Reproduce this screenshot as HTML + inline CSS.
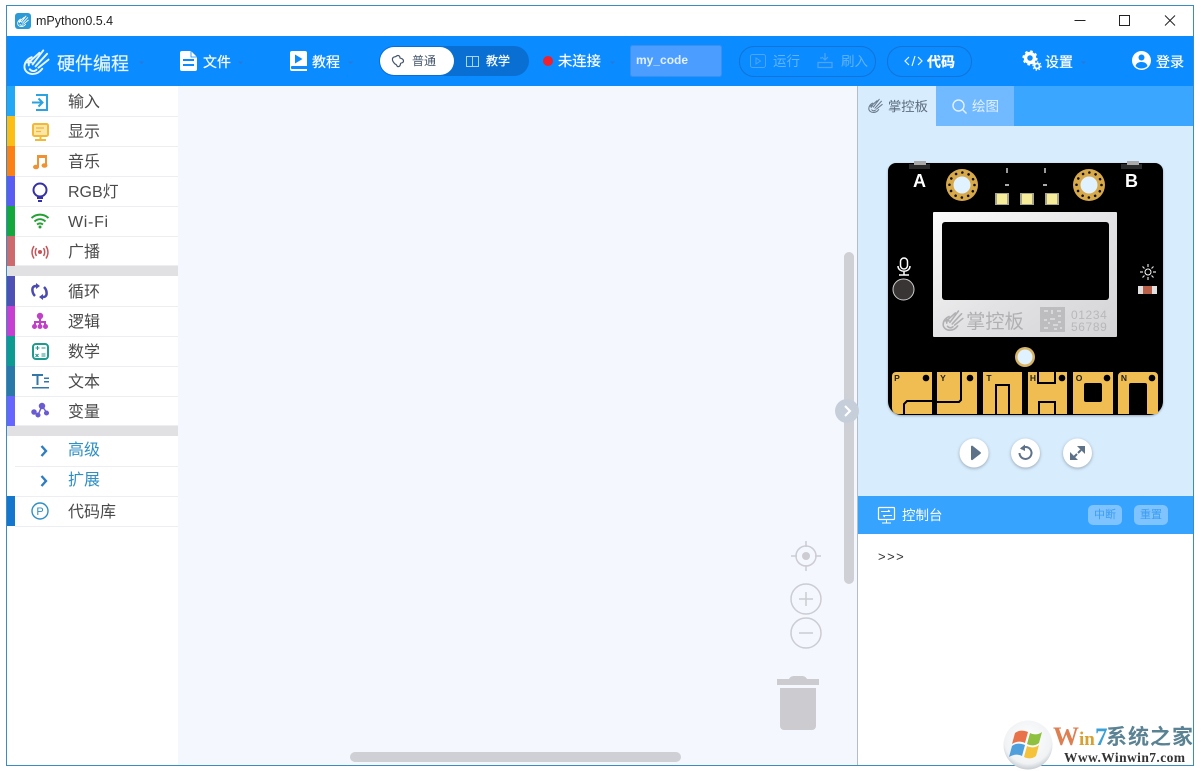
<!DOCTYPE html>
<html><head><meta charset="utf-8"><style>
html,body{margin:0;padding:0;background:#fff;width:1201px;height:771px;overflow:hidden}
body{position:relative;font-family:"Liberation Sans","Noto Sans CJK SC",sans-serif;color:#333}
.a{position:absolute}
.t{position:absolute;white-space:nowrap;line-height:20px;height:20px}
.s{font-size:16px;color:#4a4a4a;left:68px;line-height:30px;height:30px}
.w{color:#fff;font-size:14px;-webkit-text-stroke:.2px #fff}
.bar{position:absolute;left:7px;width:8px;height:30px}
.row{position:absolute;left:15px;width:163px;height:29px;border-bottom:1px solid #eceef2;background:#fff}
svg{position:absolute;left:0;top:0}
</style></head><body>
<!-- window -->
<div class="a" style="left:6px;top:5px;width:1186px;height:759px;border:1px solid #3b8cc0;background:#fff"></div>
<div class="a" style="left:7px;top:36px;width:1186px;height:50px;background:#0a8bff"></div>
<!-- sidebar -->
<div class="a" style="left:7px;top:86px;width:171px;height:679px;background:#fff"></div>
<div class="a" style="left:178px;top:86px;width:679px;height:679px;background:#f5f7ff"></div>
<div class="a" style="left:857px;top:86px;width:1px;height:679px;background:#b4bcc8"></div>
<div class="row" style="top:87px"></div><div class="row" style="top:117px"></div><div class="row" style="top:147px"></div><div class="row" style="top:177px"></div><div class="row" style="top:207px"></div><div class="row" style="top:237px;height:28px"></div>
<div class="row" style="top:277px"></div><div class="row" style="top:307px"></div><div class="row" style="top:337px"></div><div class="row" style="top:367px"></div><div class="row" style="top:397px;height:28px"></div>
<div class="row" style="top:437px"></div><div class="row" style="top:467px"></div><div class="row" style="top:497px"></div>
<div class="bar" style="top:86px;background:#22a8f4"></div>
<div class="bar" style="top:116px;background:#fcbd14"></div>
<div class="bar" style="top:146px;background:#fb8114"></div>
<div class="bar" style="top:176px;background:#5a5cf2"></div>
<div class="bar" style="top:206px;background:#14a83c"></div>
<div class="bar" style="top:236px;background:#cc6a6e"></div>
<div class="a" style="left:7px;top:266px;width:171px;height:10px;background:#e1e1e3"></div>
<div class="bar" style="top:276px;background:#4f50b4"></div>
<div class="bar" style="top:306px;background:#c63fd0"></div>
<div class="bar" style="top:336px;background:#0d9a90"></div>
<div class="bar" style="top:366px;background:#2a78a8"></div>
<div class="bar" style="top:396px;background:#6666ff"></div>
<div class="a" style="left:7px;top:426px;width:171px;height:10px;background:#e1e1e3"></div>
<div class="bar" style="top:496px;background:#1476cc"></div>
<div class="t s" style="top:88px">输入</div>
<div class="t s" style="top:118px">显示</div>
<div class="t s" style="top:148px">音乐</div>
<div class="t s" style="top:178px">RGB灯</div>
<div class="t s" style="top:208px;letter-spacing:.7px">Wi-Fi</div>
<div class="t s" style="top:238px">广播</div>
<div class="t s" style="top:278px">循环</div>
<div class="t s" style="top:308px">逻辑</div>
<div class="t s" style="top:338px">数学</div>
<div class="t s" style="top:368px">文本</div>
<div class="t s" style="top:398px">变量</div>
<div class="t s" style="top:436px;color:#2f8fc4">高级</div>
<div class="t s" style="top:466px;color:#2f8fc4">扩展</div>
<div class="t s" style="top:498px">代码库</div>
<!-- title -->
<div class="t" style="left:36px;top:11px;font-size:12.5px;color:#222">mPython0.5.4</div>
<!-- header pills -->
<div class="a" style="left:379px;top:46px;width:150px;height:30px;border-radius:15px;background:#0a6fd2"></div>
<div class="a" style="left:380px;top:47px;width:74px;height:28px;border-radius:14px;background:#fff"></div>
<div class="a" style="left:630px;top:45px;width:92px;height:32px;border-radius:3px;background:#4b9eff;box-shadow:inset 0 0 0 1px #3a90f0"></div>
<div class="a" style="left:739px;top:46px;width:135px;height:29px;border-radius:15px;border:1px solid #1274d8"></div>
<div class="a" style="left:887px;top:46px;width:83px;height:29px;border-radius:15px;border:1px solid #1274d8"></div>
<div class="t" style="left:57px;top:53px;font-size:18px;color:#e8f4ff;line-height:22px;height:22px;-webkit-text-stroke:.2px #e8f4ff">硬件编程</div>
<div class="t w" style="left:203px;top:52px">文件</div>
<div class="t w" style="left:312px;top:52px">教程</div>
<div class="t" style="left:412px;top:51px;font-size:12px;color:#44566c">普通</div>
<div class="t w" style="left:486px;top:51px;font-size:12px">教学</div>
<div class="t w" style="left:558px;top:52px;font-size:14.300px">未连接</div>
<div class="t" style="left:636px;top:50px;font-size:12px;font-weight:bold;color:#e4f0ff">my_code</div>
<div class="t" style="left:773px;top:52px;font-size:13.500px;color:#62b2ff">运行</div>
<div class="t" style="left:841px;top:52px;font-size:13.500px;color:#62b2ff">刷入</div>
<div class="t w" style="left:927px;top:52px;font-weight:bold">代码</div>
<div class="t w" style="left:1045px;top:52px">设置</div>
<div class="t w" style="left:1156px;top:52px">登录</div>
<!-- right panel -->
<div class="a" style="left:858px;top:86px;width:335px;height:40px;background:#3ba6ff"></div>
<div class="a" style="left:858px;top:86px;width:78px;height:40px;background:#d7ecfd"></div>
<div class="a" style="left:936px;top:86px;width:78px;height:40px;background:#72baff"></div>
<div class="a" style="left:858px;top:126px;width:335px;height:370px;background:#d7ecfd"></div>
<div class="a" style="left:858px;top:496px;width:335px;height:38px;background:#36a3ff"></div>
<div class="t" style="left:888px;top:97px;font-size:13.300px;color:#5c6c7e">掌控板</div>
<div class="t" style="left:972px;top:97px;font-size:13.500px;color:#e2f1ff">绘图</div>
<div class="t" style="left:902px;top:506px;font-size:13.500px;color:#fff">控制台</div>
<div class="a" style="left:1088px;top:505px;width:34px;height:20px;border-radius:5px;background:#7fc3ff;color:#3d9df0;font-size:11px;line-height:21px;text-align:center">中断</div>
<div class="a" style="left:1134px;top:505px;width:34px;height:20px;border-radius:5px;background:#7fc3ff;color:#3d9df0;font-size:11px;line-height:21px;text-align:center">重置</div>
<div class="t" style="left:878px;top:547px;font-size:13px;letter-spacing:1.500px;color:#333">&gt;&gt;&gt;</div>
<!-- scrollbars -->
<div class="a" style="left:844px;top:252px;width:10px;height:332px;border-radius:5px;background:#cfd0d6"></div>
<div class="a" style="left:350px;top:752px;width:331px;height:10px;border-radius:5px;background:#cfd0d6"></div>

<svg width="1201" height="771" viewBox="0 0 1201 771" xmlns="http://www.w3.org/2000/svg">
<defs>
<symbol id="logo" viewBox="0 0 28 28"><g fill="none" stroke="currentColor" stroke-width="2" stroke-linecap="round">
<path d="M9 9.500C5 11 1.500 15 1.500 19.500 1.500 24 5.500 27 10 27 14 27 17.500 25 20 21.500"/>
<path d="M7 14L17 5M10 17L21 2.500M13 19L25 6M16 20.500L26.500 12"/>
<path d="M3.500 15H9M6 13v5M7 22c2 2.500 5 2.500 7 .5"/></g></symbol>
</defs>
<!-- title icon -->
<rect x="15" y="13" width="16" height="16" rx="3" fill="#2b9bd8"/>
<use href="#logo" x="17" y="15" width="12" height="12" color="#fff"/>
<!-- window controls -->
<path d="M1074.500 20.500h11" stroke="#222" fill="none"/>
<rect x="1119.500" y="15.500" width="10" height="10" fill="none" stroke="#222"/>
<path d="M1165 15.500l10 10M1175 15.500l-10 10" stroke="#222" fill="none"/>
<!-- header -->
<use href="#logo" x="23" y="48" width="27" height="27" color="#e8f4ff"/>
<path d="M139 61.500h5l-2.500 2.500z" fill="#2a78d8"/>
<path d="M182 51h9l6 6v12a2 2 0 0 1-2 2h-13a2 2 0 0 1-2-2V53a2 2 0 0 1 2-2z" fill="#fff"/>
<path d="M191 51v6h6" fill="none" stroke="#0a8bff" stroke-width=".8"/>
<path d="M183 60h11M183 65h11" stroke="#0a8bff" stroke-width="2"/>
<path d="M238 61.500h5l-2.500 2.500z" fill="#2a78d8"/>
<path d="M292 51h13a2 2 0 0 1 2 2v13h-15c-1.500 0-1.500 3 0 3h15v2h-15a2 2 0 0 1-2-2V53a2 2 0 0 1 2-2z" fill="#fff"/>
<path d="M295 54.500l7.500 4.500-7.500 4.500z" fill="#0a8bff"/>
<path d="M348 61.500h5l-2.500 2.500z" fill="#2a78d8"/>
<!-- puzzle -->
<path d="M392.500 58.500c1-2.500 3-1 4-2.500 1.800-1.200 3.500 0 3.500 2 1 .5 3.500.5 3.500 3s-2.500 1.500-3 2.500c0 2-1 3.500-3 3-1-1-.5-2-2.500-2.500-1-1-3-3-2.500-5.500z" fill="none" stroke="#44566c" stroke-width="1.200"/>
<path d="M466.500 56.500h12v10h-12zM472.500 56.500v10" fill="none" stroke="#a7d2ff"/>
<circle cx="548" cy="61" r="5" fill="#f0202c"/>
<path d="M610 61.500h5l-2.500 2.500z" fill="#2a78d8"/>
<!-- run -->
<rect x="750.500" y="54.500" width="15" height="13" rx="2" fill="none" stroke="#4da4f5"/>
<path d="M756 58l4.500 3-4.500 3z" fill="none" stroke="#4da4f5"/>
<path d="M825 53v7M822 57l3 3 3-3M822 58h-2M818 62.500h14v5h-14z" fill="none" stroke="#4da4f5" stroke-width="1.200"/>
<path d="M909 57l-4 4 4 4M912 66l3-10M918 57l4 4-4 4" fill="none" stroke="#e8f4ff" stroke-width="1.200"/>
<!-- settings -->
<g fill="none" stroke="#fff"><circle cx="1030" cy="58" r="4.500" stroke-width="3.500"/><circle cx="1030" cy="58" r="6.500" stroke-width="2.200" stroke-dasharray="2.500 2.600"/><circle cx="1037" cy="66" r="2.500" stroke-width="1.800"/><circle cx="1037" cy="66" r="4" stroke-width="1.300" stroke-dasharray="1.500 1.600"/></g>
<path d="M1081 61.500h5l-2.500 2.500z" fill="#2a78d8"/>
<circle cx="1141.500" cy="60.500" r="9.500" fill="#fff"/>
<circle cx="1141.500" cy="57.500" r="3" fill="#0a8bff"/>
<path d="M1135.500 66c1-3 3-4 6-4s5 1 6 4c-1.500 1.500-3.500 2.500-6 2.500s-4.500-1-6-2.500z" fill="#0a8bff"/>
<!-- sidebar icons -->
<g fill="none" stroke="#2aa3e0" stroke-width="2"><path d="M36 95h11v15H36M32 102.500h10M38.500 98.500l4 4-4 4"/></g>
<g fill="none" stroke="#f3b835" stroke-width="2"><rect x="33" y="124" width="15" height="12" rx="1.500" fill="#fbe6a8"/><path d="M36 128h8M36 131.500h5" stroke-width="1.200"/><path d="M40.500 136v3M35 140h11"/></g>
<g fill="#ef9234"><path d="M37 155h10v10.500h-2V158h-6v9.500h-2z"/><ellipse cx="36" cy="167" rx="3" ry="2.300"/><ellipse cx="44.500" cy="165.500" rx="3" ry="2.300"/></g>
<g fill="none" stroke="#3530a8" stroke-width="2"><circle cx="40" cy="190" r="6.500"/><path d="M37 198h6M38 201h4"/></g>
<g fill="none" stroke="#25a035" stroke-width="2"><path d="M31.500 218c5-4.500 12-4.500 17 0M34.500 221.500c3.500-3 7.500-3 11 0M37 224.500c2-1.500 4-1.500 6 0"/></g><circle cx="40" cy="227" r="1.500" fill="#25a035"/>
<g fill="none" stroke="#c4565a" stroke-width="1.500"><circle cx="40" cy="252" r="1.300" fill="#c4565a"/><path d="M36.500 248c-1.500 2.500-1.500 5.500 0 8M43.500 248c1.500 2.500 1.500 5.500 0 8M34 246c-2.500 4-2.500 8.500 0 12.500M46 246c2.500 4 2.500 8.500 0 12.500"/></g>
<g fill="none" stroke="#4a4ab0" stroke-width="2.500"><path d="M36 286c-3 0-4 2-3.500 5 .2 2 1 3.500 2.500 5M43 297c3 0 4-2 3.500-5-.2-2-1-3.500-2.500-5"/></g><path d="M36 283v6l4-3zM43 294v6l-4-3z" fill="#4a4ab0"/>
<g fill="#c040c8"><circle cx="40" cy="316" r="3.200"/><path d="M39 318h2v4h-2zM34 321h12v4h-2v-2h-3v2h-2v-2h-3v2h-2z"/><circle cx="34.500" cy="326.500" r="2.500"/><circle cx="40" cy="326.500" r="2.500"/><circle cx="45.500" cy="326.500" r="2.500"/></g>
<rect x="33" y="344" width="15" height="15" rx="3" fill="none" stroke="#1f9a8e" stroke-width="2"/>
<path d="M35.500 348h4M37.500 346v4M41.500 348h4M35.500 354l3 3M38.500 354l-3 3M41.500 354h4M41.500 356h4" stroke="#1f9a8e" fill="none" stroke-width="1.100"/>
<g fill="#3277a8"><path d="M32 374h11v2h-4.500v9h-2v-9H32zM44 377.500h5v1.500h-5zM44 381h5v1.500h-5zM32 387h17v1.500H32z"/></g>
<g stroke="#6a5cd0" stroke-width="1.500" fill="#6a5cd0"><path d="M34 412l4 3 4-9 5 7" fill="none"/><circle cx="34" cy="412" r="2"/><circle cx="38" cy="415" r="1.800"/><circle cx="42" cy="406" r="2.500"/><circle cx="46.500" cy="413" r="1.800"/></g>
<path d="M41.500 446l4.500 5-4.500 5M41.500 476l4.500 5-4.500 5" fill="none" stroke="#2f7cc0" stroke-width="2.400"/>
<circle cx="40" cy="511" r="8" fill="none" stroke="#2f8fc4" stroke-width="1.400"/>
<text x="40" y="515" font-size="11" fill="#2f8fc4" text-anchor="middle" font-family="Liberation Sans">P</text>
<!-- tabs icons -->
<use href="#logo" x="868" y="98" width="15" height="15" color="#6a7a8c"/>
<circle cx="958.500" cy="105.500" r="5.500" fill="none" stroke="#e2f1ff" stroke-width="1.400"/>
<path d="M962.500 109.500l4 4" stroke="#e2f1ff" stroke-width="1.400"/>
<!-- board -->
<path d="M896 163h259a8 8 0 0 1 8 8v230c0 8-6 14-14 14H902c-8 0-14-6-14-14V171a8 8 0 0 1 8-8z" fill="#000" filter="drop-shadow(0 1px 1px rgba(0,0,0,.3))"/>
<rect x="909" y="164" width="21" height="5" fill="#2a2a2a"/><rect x="1121" y="164" width="21" height="5" fill="#2a2a2a"/>
<rect x="914" y="161" width="12" height="4" fill="#aaa"/><rect x="1127" y="161" width="12" height="4" fill="#aaa"/>
<text x="919.500" y="187" font-family="Liberation Sans" font-weight="bold" font-size="18" fill="#fff" text-anchor="middle">A</text>
<text x="1131.500" y="187" font-family="Liberation Sans" font-weight="bold" font-size="18" fill="#fff" text-anchor="middle">B</text>
<g><circle cx="962" cy="185" r="16" fill="#d8a94a"/><circle cx="962" cy="185" r="8.500" fill="#e0f2ff"/><circle cx="962" cy="185" r="12.500" fill="none" stroke="#111" stroke-width="2.600" stroke-linecap="round" stroke-dasharray="0.010 6.535"/>
<circle cx="1089" cy="185" r="16" fill="#d8a94a"/><circle cx="1089" cy="185" r="8.500" fill="#e0f2ff"/><circle cx="1089" cy="185" r="12.500" fill="none" stroke="#111" stroke-width="2.600" stroke-linecap="round" stroke-dasharray="0.010 6.535"/></g>
<path d="M1007 168v5M1045 168v5" stroke="#999" stroke-width="2"/>
<path d="M1005 185h4M1043 185h4" stroke="#aaa" stroke-width="2"/>
<g><rect x="995" y="193" width="14" height="12" fill="#a8a68a"/><rect x="997" y="194" width="10" height="10" fill="#f7ec9a"/>
<rect x="1020" y="193" width="14" height="12" fill="#a8a68a"/><rect x="1022" y="194" width="10" height="10" fill="#f7ec9a"/>
<rect x="1045" y="193" width="14" height="12" fill="#a8a68a"/><rect x="1047" y="194" width="10" height="10" fill="#f7ec9a"/></g>
<defs><linearGradient id="m" x1="0" y1="0" x2="1" y2="1"><stop offset="0" stop-color="#fbfbfb"/><stop offset=".55" stop-color="#e2e2e4"/><stop offset="1" stop-color="#d4d4d6"/></linearGradient></defs>
<rect x="933" y="212" width="184" height="125" rx="1" fill="url(#m)"/>
<rect x="942" y="222" width="167" height="78" rx="3" fill="#000"/>
<use href="#logo" x="942" y="309" width="22" height="22" color="#b0b0b2"/>
<text x="966" y="328" font-family="Noto Sans CJK SC,sans-serif" font-size="19.300" fill="#b0b0b2">掌控板</text>
<rect x="1040" y="307" width="25" height="25" fill="#bdbdbf"/>
<path d="M1044 311h4M1057 311h4M1044 328h4M1052 310v4M1050 319h5M1058 322h3M1053 325h5M1044 320h3M1058 316h3M1048 323h2M1054 329h3M1060 328h2" stroke="#e0e0e2" stroke-width="1.600"/>
<text x="1071" y="319" font-family="Liberation Sans" font-size="12" letter-spacing=".6" fill="#b8b8ba">01234</text>
<text x="1071" y="331" font-family="Liberation Sans" font-size="12" letter-spacing=".6" fill="#b8b8ba">56789</text>
<g fill="none" stroke="#fff" stroke-width="1.500"><rect x="900.500" y="258" width="7" height="11" rx="3.500"/><path d="M898 266c0 7 12 7 12 0M904 272v3M899 275h10"/></g>
<circle cx="903.500" cy="289.500" r="10.500" fill="#3a3535" stroke="#cfcfcf" stroke-width="1"/>
<circle cx="1148" cy="272" r="3" fill="none" stroke="#fff"/>
<path d="M1148 264v3M1148 277v3M1140 272h3M1153 272h3M1142.500 266.500l2 2M1151.500 275.500l2 2M1142.500 277.500l2-2M1151.500 268.500l2-2" stroke="#ddd" stroke-width="1.200"/>
<rect x="1138" y="286" width="19" height="8" fill="#e0e0e0"/><rect x="1143" y="286" width="9" height="8" fill="#b8604a"/>
<circle cx="1025" cy="357" r="10" fill="#d8b566"/><circle cx="1025" cy="357" r="7.500" fill="#e0f2ff"/>
<g fill="#efbd52">
<path d="M892 376a4 4 0 0 1 4-4h36v42h-34a6 6 0 0 1-6-6z"/>
<path d="M937 372h40v42h-40z"/>
<path d="M983 372h39v42h-39z"/>
<path d="M1028 372h39v42h-39z"/>
<path fill-rule="evenodd" d="M1073 372h40v42h-40zM1086 383h14a2 2 0 0 1 2 2v15a2 2 0 0 1-2 2h-14a2 2 0 0 1-2-2v-15a2 2 0 0 1 2-2z"/>
<path d="M1118 376a4 4 0 0 1 4-4h32a4 4 0 0 1 4 4v38h-11v-29a2 2 0 0 0-2-2h-14a2 2 0 0 0-2 2v29h-11z"/>
</g>
<g fill="none" stroke="#000" stroke-width="2"><path d="M904 415v-11l3-3h25"/><path d="M937 402h22l2-2v-28"/>
<path d="M996 415v-30h13v30"/>
<path d="M1038 372v11h17v-11"/><path d="M1039 415v-13h16v13"/></g>
<g fill="#000"><circle cx="926" cy="378" r="3.300"/><circle cx="970" cy="378" r="3.300"/><circle cx="1062" cy="378" r="3.300"/><circle cx="1107" cy="378" r="3.300"/><circle cx="1152" cy="378" r="3.300"/></g>
<g font-family="Liberation Sans" font-weight="bold" font-size="8.500" fill="#222" text-anchor="middle"><text x="897" y="381">P</text><text x="943" y="381">Y</text><text x="989" y="381">T</text><text x="1033" y="381">H</text><text x="1079" y="381">O</text><text x="1124" y="381">N</text></g>
<!-- sim buttons -->
<g filter="drop-shadow(0 1px 1.500px rgba(0,0,0,.3))" fill="#fff"><circle cx="974" cy="453" r="14.500"/><circle cx="1025.500" cy="453" r="14.500"/><circle cx="1077.500" cy="453" r="14.500"/></g>
<path d="M971 446.500a1 1 0 0 1 1.500-.7l8 6.300a1 1 0 0 1 0 1.600l-8 6.300a1 1 0 0 1-1.500-.7z" fill="#5d7188"/>
<path d="M1021 449a6 6 0 1 1-1.500 4" fill="none" stroke="#5d7188" stroke-width="2"/><path d="M1025 444.500v6.500l-5-2.500z" fill="#5d7188"/>
<path d="M1077 446h8v8zM1070 452v8h8z" fill="#5d7188"/>
<path d="M1081 450l-3 3M1077 454l-3 3" stroke="#5d7188" stroke-width="2" fill="none"/>
<!-- console icon -->
<rect x="878.500" y="507.500" width="16" height="12" rx="1" fill="none" stroke="#fff" stroke-width="1.200"/>
<path d="M881 511.500h9M890 511.500l-2-1.500M892 515.500h-9M883 515.500l2 1.500M886.500 519.500v3M882 523h9" fill="none" stroke="#fff"/>
<!-- workspace controls -->
<g fill="none" stroke="#ccccd2" stroke-width="1.500"><circle cx="806" cy="556" r="10"/><path d="M806 541v6M806 565v6M791 556h6M815 556h6"/><circle cx="806" cy="599" r="15"/><path d="M799 599h14M806 592v14"/><circle cx="806" cy="633" r="15"/><path d="M799 633h14"/></g>
<circle cx="806" cy="556" r="4" fill="#ccccd2"/>
<path d="M777 679h12c1-2 3-3 5-3h8c2 0 4 1 5 3h12v6h-42z" fill="#cbcbd0"/>
<path d="M780 688h36v38a4 4 0 0 1-4 4h-28a4 4 0 0 1-4-4z" fill="#cbcbd0"/>
<!-- collapse -->
<circle cx="847" cy="411" r="12" fill="#c6cfd9"/>
<path d="M845 406l5 5-5 5" fill="none" stroke="#fff" stroke-width="2"/>
<rect x="859" y="396" width="2" height="30" fill="#d7ecfd"/>
<!-- watermark -->
<defs><radialGradient id="wg" cx=".5" cy=".4" r=".6"><stop offset="0" stop-color="#fff"/><stop offset=".8" stop-color="#f0f2f4"/><stop offset="1" stop-color="#c6ccd2"/></radialGradient></defs>
<circle cx="1028" cy="745" r="24.500" fill="url(#wg)"/>
<path d="M1015 733c4-3 8-3 13-1l-3 11c-4-2-8-2-13 1z" fill="#e8734a"/>
<path d="M1030 733c4 2 8 2 12-1l-3 11c-4 3-8 3-12 1z" fill="#8fc040"/>
<path d="M1012 746c4-3 8-3 13-1l-3 11c-4-2-8-2-13 1z" fill="#4f9fdc"/>
<path d="M1027 746c4 2 8 2 12-1l-3 11c-4 3-8 3-12 1z" fill="#f5c23c"/>
<text x="1053" y="745" font-family="Liberation Serif" font-weight="bold" font-size="26" fill="#de7f52">W</text>
<text x="1079" y="745" font-family="Liberation Serif" font-weight="bold" font-size="19" fill="#d8a030">in</text>
<text x="1095" y="745" font-family="Liberation Serif" font-weight="bold" font-size="25" fill="#3aa0d8">7</text>
<text x="1106" y="744" font-family="Noto Sans CJK SC,sans-serif" font-weight="bold" font-size="21" fill="#5a8292" textLength="87">系统之家</text>
<text x="1064" y="762" font-family="Liberation Serif" font-weight="bold" font-size="13.500" fill="#333" textLength="121">Www.Winwin7.com</text>
</svg>
</body></html>
